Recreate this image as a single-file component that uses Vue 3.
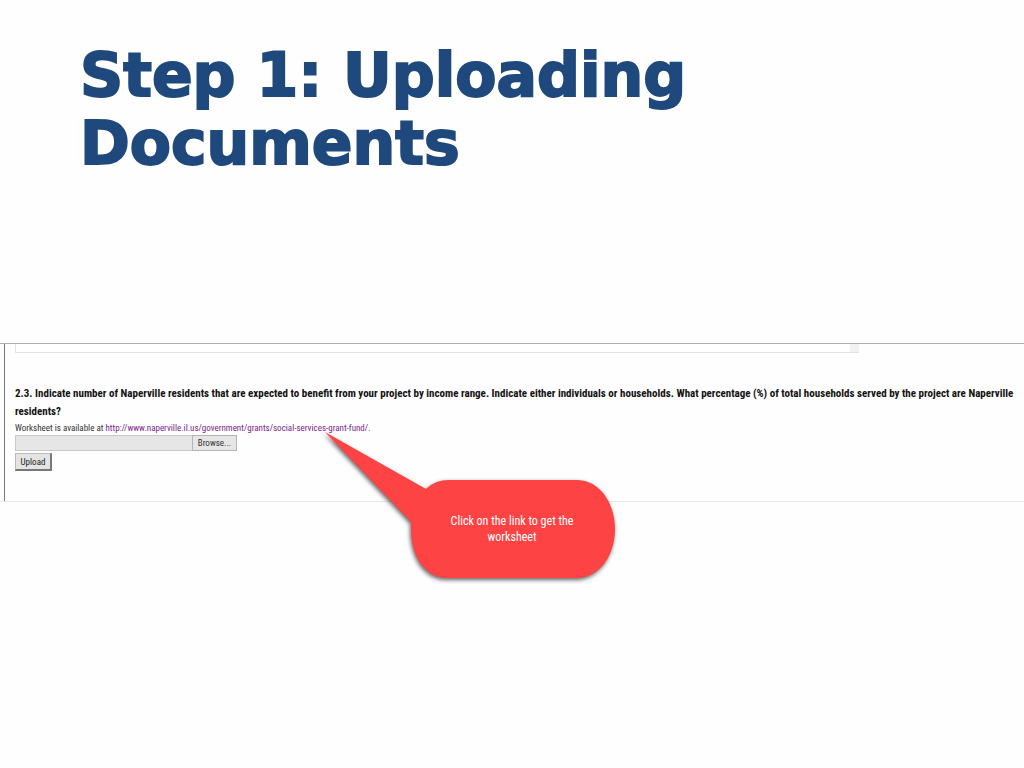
<script setup>
import { ref } from 'vue'

const answer = ref('')
const fileName = ref('')
const worksheetUrl = 'http://www.naperville.il.us/government/grants/social-services-grant-fund/'
</script>

<template>
  <main class="slide">
    <h1 class="title">Step 1: Uploading Documents</h1>

    <section class="panel">
      <div class="answer">
        <textarea v-model="answer" class="answer-box" aria-label="Previous answer" rows="1"></textarea>
        <span class="answer-scroll"></span>
      </div>

      <form class="question" @submit.prevent>
        <label class="prompt" for="worksheet">2.3. Indicate number of Naperville residents that are expected to benefit from your project by income range. Indicate either individuals or households. What percentage (%) of total households served by the project are Naperville residents?</label>
        <p class="hint">Worksheet is available at <a :href="worksheetUrl">{{ worksheetUrl }}</a>.</p>
        <div class="picker">
          <input id="worksheet" v-model="fileName" class="file" type="text" readonly />
          <button class="browse" type="button">Browse...</button>
        </div>
        <button class="upload" type="submit">Upload</button>
      </form>

      <aside class="callout">
        <svg class="bubble" viewBox="0 0 300 160" width="300" height="160" aria-hidden="true">
          <path d="M4 4 L105 61 Q114 52 128 52 H256 C278 52 294 74 294 101 C294 128 278 150 256 150 H126 C104 150 90 128 90 101 V94 Z" />
        </svg>
        <p class="callout-text">Click on the link to get the worksheet</p>
      </aside>
    </section>
  </main>
</template>

<style>
body {
  margin: 0;
  background: #fefefe;
}
</style>

<style scoped>
.slide {
  min-height: 100vh;
  box-sizing: border-box;
  padding-top: 41px;
  overflow: hidden;
  background: #fefefe;
  color: #111;
  font-family: "Roboto Condensed", Roboto, sans-serif;
}

.title {
  max-width: 720px;
  margin: 0 80px 166px;
  color: #1f497d;
  font-family: "Arial Black", "DejaVu Sans", sans-serif;
  font-size: 60px;
  font-weight: 900;
  line-height: 68px;
  -webkit-text-stroke: 2px #1f497d;
}

.panel {
  position: relative;
  border-top: 1px solid #b0b0b0;
  border-bottom: 1px solid #e8e8e8;
}

.answer,
.question {
  margin-left: 4px;
  padding-left: 10px;
  border-left: 1px solid #777;
}

.answer {
  display: flex;
  padding-bottom: 32px;
}

.answer-box {
  flex: 0 1 835px;
  box-sizing: border-box;
  height: 9px;
  padding: 0;
  border: solid #e2e2e2;
  border-width: 0 0 1px 1px;
  background: #fff;
  resize: none;
  overflow: hidden;
}

.answer-scroll {
  width: 9px;
  height: 8px;
  border-bottom: 1px solid #e2e2e2;
  background: #f1f1f1;
}

.question {
  padding-bottom: 30px;
}

.prompt {
  display: block;
  font-size: 11px;
  font-weight: 700;
  line-height: 18px;
}

.hint {
  margin: 0;
  color: #333;
  font-size: 9px;
  line-height: 14px;
}

.hint a {
  color: #7a1f8a;
  text-decoration: none;
}

.picker {
  display: flex;
  width: 222px;
  height: 16px;
  margin-bottom: 2px;
}

.file {
  flex: 1;
  min-width: 0;
  box-sizing: border-box;
  padding: 0 4px;
  border: 1px solid #c9c9c9;
  border-right: 0;
  background: #e6e6e6;
}

.browse {
  width: 45px;
  padding: 0;
  border: 1px solid #b5b5b5;
  background: #e6e6e6;
  color: #333;
  font: 9px/14px "Roboto Condensed", Roboto, sans-serif;
}

.upload {
  display: block;
  width: 37px;
  height: 18px;
  padding: 0;
  border: solid;
  border-width: 1px 2px 2px 1px;
  border-color: #bbb #777 #777 #bbb;
  background: #e4e4e4;
  color: #222;
  font: 9px/14px "Roboto Condensed", Roboto, sans-serif;
  white-space: nowrap;
}

.callout {
  position: absolute;
  top: 84px;
  left: 321px;
  width: 300px;
  height: 160px;
}

.bubble {
  display: block;
  overflow: visible;
  fill: #fd4343;
  filter: drop-shadow(-1px 2px 2px rgba(0, 0, 0, 0.6));
}

.callout-text {
  position: absolute;
  top: 85px;
  left: 121px;
  width: 140px;
  margin: 0;
  color: #fff;
  font-size: 12px;
  line-height: 16px;
  text-align: center;
}
</style>
